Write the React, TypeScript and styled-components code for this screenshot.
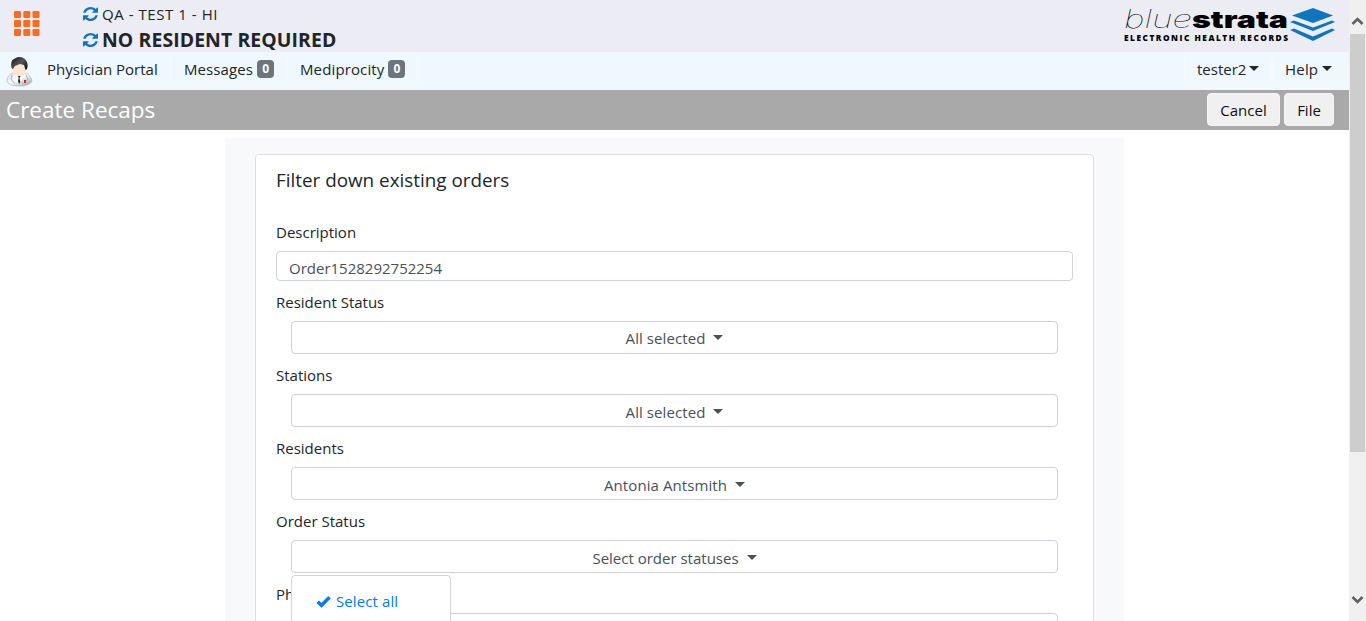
import React from 'react';
import styled, { createGlobalStyle } from 'styled-components';

const GlobalStyle = createGlobalStyle`
  *, *::before, *::after { box-sizing: border-box; }
  body {
    margin: 0;
    overflow: hidden;
    background: #fff;
    color: #212529;
    font: 15px/24px "Open Sans", "Noto Sans", sans-serif;
  }
  button, input { font: inherit; }
`;

const Window = styled.div`
  display: flex;
  width: 100%;
  height: 621px;
  overflow: hidden;
`;

const Page = styled.div`
  flex: 1;
  min-width: 0;
  display: flex;
  flex-direction: column;
  overflow: hidden;
`;

const Text = styled.span<{ $track?: number }>`
  white-space: nowrap;
  letter-spacing: ${(p) => p.$track ?? 0}px;
`;

const Header = styled.header`
  display: flex;
  flex: none;
  height: 52px;
  background: #ececf5;
`;

const AppsButton = styled.div`
  width: 83px;
  padding: 11px 0 0 14px;
  svg { display: block; }
`;

const Context = styled.div`
  flex: 1;
  padding-top: 2px;
`;

const ContextLine = styled.div<{ $strong?: boolean }>`
  display: flex;
  align-items: center;
  height: 25px;
  padding-bottom: ${(p) => (p.$strong ? 0 : 1)}px;
  gap: 4px;
  font-size: ${(p) => (p.$strong ? 19.4 : 15)}px;
  font-weight: ${(p) => (p.$strong ? 700 : 400)};
`;

const Brand = styled.div`
  width: 226px;
  padding-top: 6px;
  svg { display: block; }
`;

const Nav = styled.nav`
  display: flex;
  flex: none;
  height: 38px;
  background: #f0f8ff;
  padding: 0 4px 5px 5px;
`;

const NavItem = styled.div<{ $width: number }>`
  display: flex;
  align-items: center;
  width: ${(p) => p.$width}px;
  padding: 1px 0 0 12px;
  border: 1px solid #f5f8fc;
  border-radius: 4px;
`;

const Spacer = styled.div`
  flex: 1;
`;

const Avatar = styled.div`
  width: 29px;
  padding-top: 4px;
  svg { display: block; }
`;

const Badge = styled.span`
  width: 17px;
  height: 18px;
  margin-left: 4px;
  border-radius: 4px;
  background: #6c757d;
  color: #fff;
  font-size: 12px;
  font-weight: 700;
  line-height: 18px;
  text-align: center;
`;

const Caret = styled.i<{ $gap?: number }>`
  margin: 0 0 1px ${(p) => p.$gap ?? 4}px;
  border: 5px solid transparent;
  border-top-color: currentColor;
  border-bottom: 0;
`;

const TitleBar = styled.div`
  display: flex;
  flex: none;
  align-items: center;
  height: 40px;
  padding: 0 15px 1px 6px;
  gap: 4px;
  background: #a9a9a9;
`;

const PageTitle = styled.h1`
  flex: 1;
  margin: 0;
  padding-top: 1px;
  color: #fff;
  font-size: 22.5px;
  font-weight: 400;
`;

const Button = styled.button<{ $width: number }>`
  width: ${(p) => p.$width}px;
  height: 33px;
  padding: 0;
  border: 1px solid #f5f5f5;
  border-radius: 4px;
  background: #f0f0f0;
  color: #111;
`;

const Panel = styled.main`
  flex: none;
  width: 899px;
  height: 700px;
  margin: 8px 0 0 225px;
  padding: 16px 30px;
  background: #f8f9fb;
`;

const Card = styled.section`
  height: 660px;
  padding: 11px 20px;
  border: 1px solid #dddfe3;
  border-radius: 4px;
  background: #fff;
`;

const CardTitle = styled.h2`
  height: 54px;
  margin: 0;
  font-size: 18.85px;
  line-height: 28px;
  font-weight: 400;
`;

const Field = styled.div`
  position: relative;
  margin-bottom: 9px;
`;

const Label = styled.label`
  display: block;
  height: 24px;
  margin-bottom: 7px;
`;

const Input = styled.input`
  display: block;
  width: 100%;
  height: 30px;
  padding: 4px 12px 0;
  border: 1px solid #ced4da;
  border-radius: 4px;
  color: #495057;
  outline: 0;
`;

const Select = styled.div<{ $lift?: boolean }>`
  display: flex;
  align-items: center;
  justify-content: center;
  height: 33px;
  margin: 0 15px;
  padding-top: ${(p) => (p.$lift ? 0 : 2)}px;
  border: 1px solid #ced0da;
  border-radius: 4px;
  color: #495057;
`;

const Menu = styled.div`
  position: absolute;
  z-index: 1;
  top: 66px;
  left: 15px;
  display: flex;
  gap: 5px;
  width: 160px;
  height: 120px;
  padding: 13px 24px;
  border: 1px solid #d2d4d8;
  border-radius: 4px;
  background: #fff;
  color: #007bff;
`;

const Scrollbar = styled.div`
  display: flex;
  flex: none;
  flex-direction: column;
  align-items: center;
  width: 17px;
  background: #f0f0f0;
`;

const Arrow = styled.div<{ $height: number }>`
  display: flex;
  justify-content: center;
  align-items: center;
  height: ${(p) => p.$height}px;
  padding-top: ${(p) => (p.$height < 40 ? 8 : 0)}px;
`;

const Thumb = styled.div`
  width: 15px;
  height: 418px;
  background: #cdcdcd;
`;

const RefreshIcon = () => (
  <svg width="15" height="14" viewBox="0 0 1536 1536" preserveAspectRatio="none" fill="#0f75bc">
    <path d="M1511 928q0 5-1 7-64 268-268 434.500T764 1536q-146 0-282.500-55T238 1324l-129 129q-19 19-45 19t-45-19-19-45V960q0-26 19-45t45-19h448q26 0 45 19t19 45-19 45l-137 137q71 66 161 102t187 36q134 0 250-65t186-179q11-17 53-117 8-23 30-23h192q13 0 22.500 9.500t9.500 22.500zM1536 128v448q0 26-19 45t-45 19h-448q-26 0-45-19t-19-45 19-45l138-138Q969 256 768 256q-134 0-250 65T332 500q-11 17-53 117-8 23-30 23H50q-13 0-22.500-9.500T18 608v-7q65-268 270-434.500T768 0q146 0 284 55.500T1297 212l130-129q19-19 45-19t45 19 19 45z" />
  </svg>
);

const CheckIcon = () => (
  <svg width="15" height="24" viewBox="0 -2 15 24">
    <path d="M1.700 10.700 5.500 14.300 13.500 6.300" fill="none" stroke="currentColor" strokeWidth="3.500" />
  </svg>
);

const AppsIcon = () => (
  <svg width="26" height="26" fill="#fd6b20">
    {[0, 9, 18].flatMap((y) =>
      [0, 9.3, 18.5].map((x) => <rect key={`${x}-${y}`} x={x} y={y} width="7" height="7" rx="1.200" />),
    )}
  </svg>
);

const DoctorIcon = () => (
  <svg width="29" height="31" viewBox="0 0 29 31">
    <defs>
      <linearGradient id="coat" x2="1" y2="1">
        <stop offset="0" stopColor="#e4e7eb" />
        <stop offset=".5" stopColor="#f6f7f8" />
        <stop offset="1" stopColor="#8e969d" />
      </linearGradient>
      <linearGradient id="hair" x2="1" y2="1">
        <stop offset="0" stopColor="#111" />
        <stop offset=".5" stopColor="#555" />
        <stop offset="1" stopColor="#050505" />
      </linearGradient>
    </defs>
    <path d="M2 25Q2 19 8 17L14 20 20 17Q26 19 27 25 25 30 14 30T2 25Z" fill="url(#coat)" stroke="#b5babf" strokeWidth=".7" />
    <path d="M10 17 14 20 18 17 16 25 14 28 11 23Z" fill="#fff" />
    <path d="M13 20h2.500l-1 2 .8 4-1.300 2-1-3 .8-3Z" fill="#222" />
    <path d="M7 11Q9 8 12 9l7-1q3 2 2.500 6-1.500 6-7 6T8 15Q6.500 14 7 11Z" fill="#fde3d2" />
    <path d="M6.500 12Q5 4 10 2.500 15-.5 20 3q4 4 2 10l-1.500 1-1.500-5-4-1-5 2-2 3Z" fill="url(#hair)" />
    <path d="m7 19-1 4 4 5M21 19l2 4-5 5" fill="none" stroke="#abb1b7" />
    <path d="M19 24h2v3h-2z" fill="#e51f1f" />
  </svg>
);

const BrandLogo = () => (
  <svg width="214" height="38" viewBox="0 0 214 38" fontFamily="Inter, sans-serif">
    <text x="1" y="21.500" fontSize="25" fontWeight="100" fontStyle="italic" textLength="68" lengthAdjust="spacingAndGlyphs">blue</text>
    <text x="69" y="21.500" fontSize="24" fontWeight="900" textLength="96" lengthAdjust="spacingAndGlyphs">strata</text>
    <text x="1" y="35" fontSize="8.300" fontWeight="800" fontFamily="Open Sans, sans-serif" textLength="164">ELECTRONIC HEALTH RECORDS</text>
    <g fill="#0f75bc">
      <path d="M190 2 210 9.500 190 17 169 9.500Z" />
      <path d="m167 16 4-1.500 19 7 19-7 3 1.500-22 9Z" />
      <path d="m167 24 4-1.500 19 8 19-8 3 1.500-22 11Z" />
    </g>
  </svg>
);

const Chevron = ({ down = false }: { down?: boolean }) => (
  <svg width="13" height="10" viewBox="0 0 13 10">
    <path d={down ? 'M1.500 2 6.500 7 11.500 2' : 'M1.500 8 6.500 3 11.500 8'} fill="none" stroke="#606060" strokeWidth="2.600" />
  </svg>
);

const filters = [
  { label: 'Resident Status', value: 'All selected', lift: true },
  { label: 'Stations', value: 'All selected' },
  { label: 'Residents', value: 'Antonia Antsmith' },
  { label: 'Order Status', value: 'Select order statuses', open: true },
  { label: 'Physicians', value: 'All selected' },
];

export default function App() {
  return (
    <Window>
      <GlobalStyle />
      <Page>
        <Header>
          <AppsButton><AppsIcon /></AppsButton>
          <Context>
            <ContextLine><RefreshIcon /><Text $track={0.55}>QA - TEST 1 - HI</Text></ContextLine>
            <ContextLine $strong><RefreshIcon /><Text $track={0.1}>NO RESIDENT REQUIRED</Text></ContextLine>
          </Context>
          <Brand><BrandLogo /></Brand>
        </Header>
        <Nav>
          <Avatar><DoctorIcon /></Avatar>
          <NavItem $width={137}><Text>Physician Portal</Text></NavItem>
          <NavItem $width={116}><Text $track={0.1}>Messages</Text><Badge>0</Badge></NavItem>
          <NavItem $width={131}><Text $track={0.13}>Mediprocity</Text><Badge>0</Badge></NavItem>
          <Spacer />
          <NavItem $width={88}><Text>tester2</Text><Caret $gap={3} /></NavItem>
          <NavItem $width={73}><Text $track={0.2}>Help</Text><Caret /></NavItem>
        </Nav>
        <TitleBar>
          <PageTitle><Text>Create Recaps</Text></PageTitle>
          <Button $width={73}><Text>Cancel</Text></Button>
          <Button $width={50}><Text>File</Text></Button>
        </TitleBar>
        <Panel>
          <Card>
            <CardTitle><Text>Filter down existing orders</Text></CardTitle>
            <Field>
              <Label>Description</Label>
              <Input defaultValue="Order1528292752254" />
            </Field>
            {filters.map((f) => (
              <Field key={f.label}>
                <Label>{f.label}</Label>
                <Select $lift={f.lift}><Text $track={f.open ? 0 : 0.08}>{f.value}</Text><Caret $gap={8} /></Select>
                {f.open && <Menu><CheckIcon /><Text $track={0.1}>Select all</Text></Menu>}
              </Field>
            ))}
          </Card>
        </Panel>
      </Page>
      <Scrollbar>
        <Arrow $height={34}><Chevron /></Arrow>
        <Thumb />
        <Spacer />
        <Arrow $height={42}><Chevron down /></Arrow>
      </Scrollbar>
    </Window>
  );
}
